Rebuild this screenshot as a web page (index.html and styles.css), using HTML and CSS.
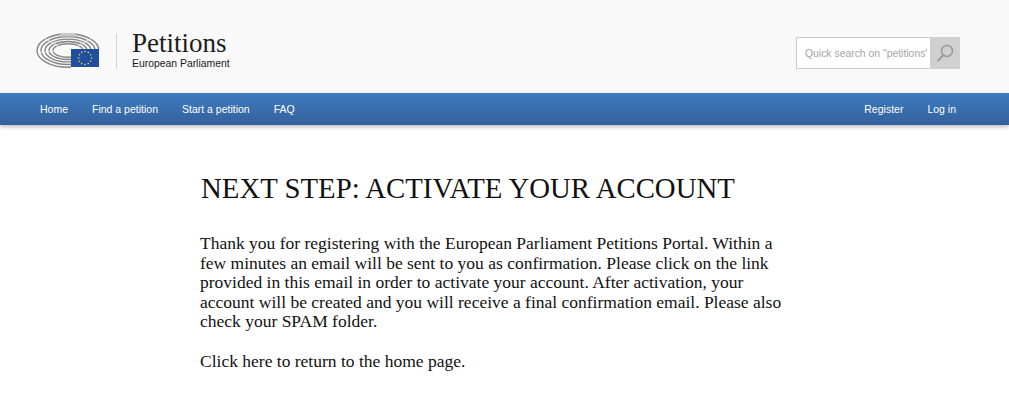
FILE: index.html
```html
<!DOCTYPE html>
<html lang="en">
<head>
    <meta charset="UTF-8">
    <meta name="viewport" content="width=device-width, initial-scale=1.0">
    <title>Petitions - European Parliament</title>
    <link rel="stylesheet" href="styles.css">
</head>

<body>
    <header class="top_bar">
        <a class="logo" href="#">
            <svg class="logo_img" width="65" height="36" viewBox="0 0 65 36">
                <defs>
                    <clipPath id="hemi">
                        <path d="M0 0H65V16H35V36H0Z"/>
                    </clipPath>
                </defs>
                <g clip-path="url(#hemi)" fill="none" stroke="#858585" stroke-width="1.4">
                    <ellipse cx="32" cy="17.5" rx="31" ry="16.8"/>
                    <ellipse cx="32" cy="17.5" rx="27" ry="14"/>
                    <ellipse cx="32" cy="17.5" rx="23" ry="11.4"/>
                    <ellipse cx="32" cy="17.5" rx="19" ry="9"/>
                    <ellipse cx="32" cy="17.5" rx="15" ry="6.8"/>
                </g>
                <path d="M8 5L22 13M56 5L42 13M2 20L19 18" stroke="#f9f9f9" stroke-width=".8"/>
                <path d="M24 0H40V3.5H24Z" fill="#c9c9c9"/>
                <rect x="35" y="16" width="28" height="18" fill="#1f4f9e"/>
                <g fill="#f0d83a">
                    <circle cx="49" cy="18.5" r=".8"/>
                    <circle cx="52.3" cy="19.4" r=".8"/>
                    <circle cx="54.6" cy="21.8" r=".8"/>
                    <circle cx="55.5" cy="25" r=".8"/>
                    <circle cx="54.6" cy="28.2" r=".8"/>
                    <circle cx="52.3" cy="30.6" r=".8"/>
                    <circle cx="49" cy="31.5" r=".8"/>
                    <circle cx="45.7" cy="30.6" r=".8"/>
                    <circle cx="43.4" cy="28.2" r=".8"/>
                    <circle cx="42.5" cy="25" r=".8"/>
                    <circle cx="43.4" cy="21.8" r=".8"/>
                    <circle cx="45.7" cy="19.4" r=".8"/>
                </g>
            </svg>
            <div class="logo_text">
                <span class="logo_title">Petitions</span>
                <span class="logo_sub">European Parliament</span>
            </div>
        </a>
        <form class="search">
            <input class="search_input" type="text" placeholder="Quick search on &quot;petitions&quot;">
            <button class="search_btn" type="button" aria-label="Search">
                <svg width="20" height="20" viewBox="0 0 20 20" fill="none" stroke="#9a9a9a">
                    <circle cx="12" cy="8" r="5.5" stroke-width="1.5"/>
                    <path d="M8 12.5L2.5 18" stroke-width="2"/>
                </svg>
            </button>
        </form>
    </header>

    <nav class="menu">
        <ul class="menu_list">
            <li><a href="#">Home</a></li>
            <li><a href="#">Find a petition</a></li>
            <li><a href="#">Start a petition</a></li>
            <li><a href="#">FAQ</a></li>
        </ul>
        <ul class="menu_list">
            <li><a href="#">Register</a></li>
            <li><a href="#">Log in</a></li>
        </ul>
    </nav>

    <main class="content">
        <h1>NEXT STEP: ACTIVATE YOUR ACCOUNT</h1>
        <p>Thank you for registering with the European Parliament Petitions Portal. Within a<br>
        few minutes an email will be sent to you as confirmation. Please click on the link<br>
        provided in this email in order to activate your account. After activation, your<br>
        account will be created and you will receive a final confirmation email. Please also<br>
        check your SPAM folder.</p>
        <p>Click here to return to the home page.</p>
    </main>
</body>
</html>
```

FILE: styles.css
```css
body{
    margin: 0;
    background-color: #fff;
    font-family: "Liberation Sans", Arial, sans-serif;
    color: #1a1a1a;
}

a{
    color: inherit;
    text-decoration: none;
}

.top_bar{
    display: flex;
    align-items: flex-start;
    justify-content: space-between;
    height: 93px;
    padding: 0 49px 0 36px;
    background-color: #f9f9f9;
}

.logo{
    display: flex;
    margin-top: 33px;
}

.logo_img{
    flex: none;
}

.logo_text{
    display: flex;
    flex-direction: column;
    height: 35px;
    margin: 1px 0 0 15px;
    padding-left: 15px;
    border-left: 1px solid #d4d4d4;
}

.logo_title{
    margin-top: -6px;
    font-family: "Liberation Serif", serif;
    font-size: 27px;
    line-height: 30px;
    color: #1c1c1c;
}

.logo_sub{
    margin-top: -1px;
    font-size: 10.4px;
    line-height: 13px;
}

.search{
    display: flex;
    margin-top: 37px;
}

.search_input{
    box-sizing: border-box;
    width: 134px;
    height: 32px;
    padding: 0 3px 0 8px;
    border: 1px solid #ccc;
    border-right: 0;
    background-color: #fff;
    font-family: "Liberation Sans", Arial, sans-serif;
    font-size: 10.4px;
}

.search_input::placeholder{
    color: #a5a5a5;
    opacity: 1;
}

.search_btn{
    display: flex;
    align-items: center;
    justify-content: center;
    width: 30px;
    height: 32px;
    padding: 0;
    border: 0;
    background-color: #d0d0d0;
}

.menu{
    display: flex;
    justify-content: space-between;
    height: 32px;
    padding: 0 41px 0 28px;
    background: linear-gradient(#3e7cc0, #34609c);
    box-shadow: 0 2px 4px rgba(0,0,0,0.25);
}

.menu_list{
    display: flex;
    margin: 0;
    padding: 0;
    list-style: none;
}

.menu_list > li > a{
    display: block;
    padding: 0 12px;
    font-size: 10.5px;
    line-height: 32px;
    color: #fff;
}

.content{
    width: 600px;
    margin-left: 200px;
    font-family: "Liberation Serif", serif;
    font-size: 17.5px;
    line-height: 19.6px;
    color: #111;
}

.content > h1{
    margin: 46px 0 29px 1px;
    font-size: 28.8px;
    font-weight: 400;
    line-height: 34px;
}

.content > p{
    margin: 0 0 19.6px;
}
```
